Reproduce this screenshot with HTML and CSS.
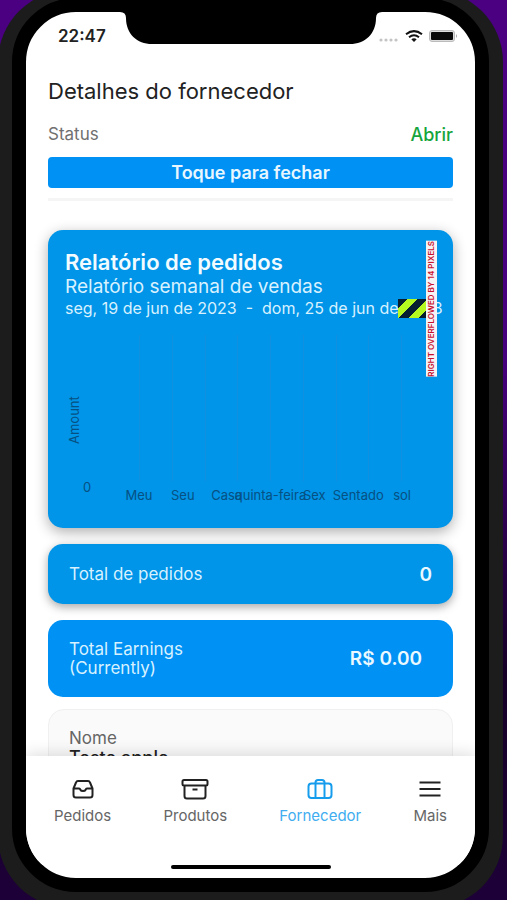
FILE: index.html
```html
<!DOCTYPE html>
<html lang="pt">
<head>
<meta charset="utf-8">
<meta name="viewport" content="width=device-width, initial-scale=1">
<title>Detalhes do fornecedor</title>
<link rel="stylesheet" href="styles.css">
</head>
<body>
<div class="phone">
  <div class="screen">
    <header class="statusbar">
      <time class="clock">22:47</time>
      <svg class="notch" width="266" height="32" viewBox="0 0 266 32" aria-hidden="true"><path d="M2 0H264Q258 0 258 6C258 22 247 32 232 32H34C19 32 8 22 8 6Q8 0 2 0Z"/></svg>
      <div class="indicators">
        <svg width="20" height="4" viewBox="0 0 20 4" fill="#c4c4c4" aria-hidden="true"><circle cx="2" cy="2" r="1.6"/><circle cx="7" cy="2" r="1.6"/><circle cx="12" cy="2" r="1.6"/><circle cx="17" cy="2" r="1.6"/></svg>
        <svg class="wifi" width="18" height="12" viewBox="0 0 18 12" fill="none" stroke="#111" stroke-width="2" aria-hidden="true"><path d="M1 4.2Q9-2 17 4.2M4 7.2Q9 3.2 14 7.2"/><path d="M6.3 9.2Q9 7.2 11.7 9.2L9 12Z" fill="#111" stroke="none"/></svg>
        <svg width="29" height="12" viewBox="0 0 29 12" aria-hidden="true"><rect x=".5" y=".5" width="25" height="11" rx="2.5" fill="#ddd" stroke="#bbb"/><rect x="2" y="2" width="22" height="8" rx="1" fill="#080808"/><path d="M27 4Q29 6 27 8Z" fill="#aaa"/></svg>
      </div>
    </header>
    <main class="content">
      <h1 class="title">Detalhes do fornecedor</h1>
      <div class="status"><span>Status</span><span class="open">Abrir</span></div>
      <button class="toggle" type="button">Toque para fechar</button>
      <hr class="divider">
      <section class="card report">
        <h2>Relatório de pedidos</h2>
        <p class="subtitle">Relatório semanal de vendas</p>
        <p class="range">seg, 19 de jun de 2023&nbsp; -&nbsp; dom, 25 de jun de 2023</p>
        <div class="overflow"><span class="stripes"></span><span class="warning">RIGHT OVERFLOWED BY 14 PIXELS</span></div>
        <div class="chart">
          <span class="axis">Amount</span>
          <span class="zero">0</span>
          <div class="plot">
            <div class="lines"><i></i><i></i><i></i><i></i><i></i><i></i><i></i><i></i><i></i></div>
            <div class="days"><span>Meu</span><span>Seu</span><span>Casa</span><span>quinta-feira</span><span>Sex</span><span>Sentado</span><span>sol</span></div>
          </div>
        </div>
      </section>
      <section class="card total"><span>Total de pedidos</span><strong>0</strong></section>
      <section class="card earnings"><span>Total Earnings<br>(Currently)</span><strong>R$ 0.00</strong></section>
      <section class="details"><span class="label">Nome</span><span class="name">Teste apple</span></section>
    </main>
    <nav class="tabs">
      <a href="#pedidos"><svg width="22" height="22" viewBox="0 0 22 22" aria-hidden="true"><path d="M1.500 10.500L4 4.500Q4.500 3 6 3H16Q17.500 3 18 4.500L20.500 10.500V17Q20.500 19.500 18 19.500H4Q1.500 19.500 1.500 17ZM1.500 10.500H7Q8 10.500 8.500 12Q9 13 11 13T13.500 12Q14 10.500 15 10.500H20.500"/></svg>Pedidos</a>
      <a href="#produtos"><svg width="28" height="22" viewBox="0 0 28 22" aria-hidden="true"><path d="M3 2H25Q26.500 2 26.500 3.500V6Q26.500 7.500 25 7.500H3Q1.500 7.500 1.500 6V3.500Q1.500 2 3 2ZM3.500 7.500V18Q3.500 20.500 6 20.500H22Q24.500 20.500 24.500 18V7.500M11.500 11.500H16.500"/></svg>Produtos</a>
      <a class="active" href="#fornecedor"><svg width="26" height="22" viewBox="0 0 26 22" aria-hidden="true"><rect x="1.500" y="5.500" width="23" height="14.500" rx="3"/><path d="M8.500 20V4.500Q8.500 2 11 2H15Q17.500 2 17.500 4.500V20"/></svg>Fornecedor</a>
      <a class="more" href="#mais"><svg width="24" height="22" viewBox="0 0 24 22" aria-hidden="true"><path d="M1.500 4.500H22.500M1.500 11H22.500M1.500 17.500H22.500"/></svg>Mais</a>
    </nav>
    <div class="home"></div>
  </div>
</div>
</body>
</html>
```
FILE: styles.css
```css
* { box-sizing: border-box; }
body {
  margin: 0;
  height: 100vh;
  overflow: hidden;
  display: flex;
  background: linear-gradient(#4b0082, #45007c 40%, #160026 75%, #1d0038);
  font-family: Inter, "Liberation Sans", sans-serif;
  color: #222;
}
h1, h2, p { margin: 0; font-weight: 400; }
.phone {
  flex: 1;
  min-width: 0;
  display: flex;
  margin: -10px 4px -8px -2px;
  padding: 8px 14px 16px;
  border-radius: 72px;
  background: #1c1c1c;
}
.screen {
  flex: 1;
  min-width: 0;
  display: flex;
  flex-direction: column;
  overflow: hidden;
  position: relative;
  border: 14px solid #000;
  border-radius: 64px;
  background: #fff;
}
.statusbar {
  position: relative;
  display: flex;
  justify-content: space-between;
  align-items: center;
  height: 48px;
  padding: 0 17px 0 32px;
}
.clock { font-size: 17px; font-weight: 600; }
.notch { position: absolute; top: 0; left: 50%; margin-left: -133px; }
.indicators { display: flex; align-items: center; gap: 6px; }
.indicators svg:first-child { margin-top: 8px; }
.content {
  flex: 1;
  min-height: 0;
  overflow: hidden;
  padding: 16px 22px 0;
}
.title { font-size: 22px; line-height: 30px; }
.status {
  display: flex;
  justify-content: space-between;
  margin-top: 16px;
  font-size: 17px;
  line-height: 25px;
  color: #707070;
}
.open { color: #16a53c; font-size: 18px; font-weight: 500; }
.toggle {
  display: block;
  width: 100%;
  height: 31px;
  margin-top: 10px;
  border: 0;
  border-radius: 4px;
  background: #0091f5;
  color: #e8f7ff;
  font: 600 18px Inter, sans-serif;
}
.divider { height: 3px; margin: 10px 0 29px; border: 0; background: #f5f5f5; }
.card {
  margin-bottom: 16px;
  border-radius: 15px;
  background: #0095e8;
  color: #d8f1ff;
}
.report {
  position: relative;
  padding: 20px 17px 0;
  box-shadow: 0 4px 14px rgba(0, 0, 0, .32);
}
.report h2 { font-size: 22px; font-weight: 600; line-height: 25px; color: #f2fbff; }
.subtitle { font-size: 19px; line-height: 23px; }
.range { font-size: 16px; line-height: 20px; white-space: nowrap; }
.overflow {
  position: absolute;
  top: 11px;
  right: 16px;
  display: flex;
  align-items: center;
}
.stripes {
  width: 28px;
  height: 19px;
  background: repeating-linear-gradient(135deg, #071d30 0 7px, #b4fa20 7px 14px);
}
.warning {
  width: 11px;
  writing-mode: vertical-rl;
  transform: rotate(180deg);
  background: #f6f3f5;
  color: #c8102e;
  font: 600 8px/11px Inter, sans-serif;
  white-space: nowrap;
}
.chart {
  display: flex;
  height: 210px;
  padding-top: 17px;
  color: #075082;
  font-size: 13px;
}
.axis {
  writing-mode: vertical-rl;
  transform: rotate(180deg);
  width: 18px;
  line-height: 18px;
  margin-bottom: 38px;
  padding-top: 46px;
}
.zero { width: 34px; align-self: flex-end; padding-bottom: 34px; line-height: 14px; }
.plot { flex: 1; min-width: 0; margin-right: 12px; }
.lines {
  display: flex;
  justify-content: space-between;
  height: 150px;
  padding: 0 22px;
}
.lines i { width: 1px; height: 146px; background: #1090de; }
.days { display: grid; grid-template-columns: repeat(7, minmax(0, 1fr)); line-height: 20px; }
.days span { display: flex; justify-content: center; white-space: nowrap; }
.total, .earnings {
  display: flex;
  justify-content: space-between;
  align-items: center;
  padding: 0 21px;
  font-size: 17px;
  line-height: 19px;
}
.total { height: 60px; box-shadow: 0 3px 10px rgba(0, 0, 0, .35); }
.earnings { height: 77px; margin-bottom: 12px; padding-right: 31px; background: #0091f5; }
.card strong { font-size: 19px; font-weight: 600; color: #eaf8ff; }
.details {
  display: flex;
  flex-direction: column;
  padding: 18px 20px;
  border: 1px solid #f0f0f0;
  border-radius: 16px;
  background: #fafafa;
  font-size: 17px;
  line-height: 20px;
}
.label { color: #666; }
.name { font-size: 18px; font-weight: 500; }
.tabs {
  position: relative;
  display: flex;
  justify-content: space-between;
  padding: 22px 28px 0;
  height: 109px;
  background: #fff;
  box-shadow: 0 -3px 14px rgba(0, 0, 0, .12);
  clip-path: inset(-20px 0 0);
}
.tabs a {
  display: flex;
  flex-direction: column;
  align-items: center;
  gap: 6px;
  color: #666;
  font-size: 15px;
  line-height: 20px;
  text-decoration: none;
}
.tabs svg { fill: none; stroke: #222; stroke-width: 2; stroke-linejoin: round; }
.tabs .active { color: #41adf0; }
.tabs .active svg { stroke: #169ced; }
.home { width: 160px; height: 4px; margin: 0 auto 9px; border-radius: 2px; background: #000; }
```
